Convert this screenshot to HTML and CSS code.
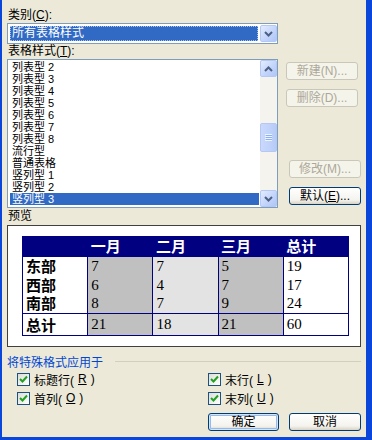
FILE: index.html
```html
<!DOCTYPE html>
<html lang="zh-CN">
<head>
    <meta charset="UTF-8">
    <meta name="viewport" content="width=device-width, initial-scale=1.0">
    <title>表格自动套用格式</title>
    <link rel="stylesheet" href="styles.css">
</head>
<body>
    <div class="window">
        <div class="dialog">
            <div class="label label-top">类别(<u>C</u>):</div>
            <div class="combo">
                <span class="combo-value">所有表格样式</span>
                <span class="arrow-btn">
                    <svg width="9" height="6" viewBox="0 0 9 6"><path d="M1 1 L4.5 4.5 L8 1" fill="none" stroke="#4d6185" stroke-width="2"/></svg>
                </span>
            </div>

            <div class="label label-mid">表格样式(<u>T</u>):</div>
            <div class="style-row">
                <div class="listbox">
                    <ul class="items">
                        <li>列表型 2</li>
                        <li>列表型 3</li>
                        <li>列表型 4</li>
                        <li>列表型 5</li>
                        <li>列表型 6</li>
                        <li>列表型 7</li>
                        <li>列表型 8</li>
                        <li>流行型</li>
                        <li>普通表格</li>
                        <li>竖列型 1</li>
                        <li>竖列型 2</li>
                        <li class="selected">竖列型 3</li>
                    </ul>
                    <div class="scrollbar">
                        <span class="scroll-btn">
                            <svg width="9" height="6" viewBox="0 0 9 6"><path d="M1 5 L4.5 1.5 L8 5" fill="none" stroke="#4d6185" stroke-width="2"/></svg>
                        </span>
                        <div class="track">
                            <span class="thumb">
                                <svg width="7" height="7" viewBox="0 0 7 7">
                                    <path d="M0 0.5 H7 M0 2.5 H7 M0 4.5 H7 M0 6.5 H7" stroke="#eef4fe" stroke-width="1"/>
                                    <path d="M1 1.5 H8 M1 3.5 H8 M1 5.5 H8" stroke="#8cb0f8" stroke-width="1"/>
                                </svg>
                            </span>
                        </div>
                        <span class="scroll-btn">
                            <svg width="9" height="6" viewBox="0 0 9 6"><path d="M1 1 L4.5 4.5 L8 1" fill="none" stroke="#4d6185" stroke-width="2"/></svg>
                        </span>
                    </div>
                </div>
                <div class="side-buttons">
                    <button class="btn disabled">新建(N)...</button>
                    <button class="btn disabled gap">删除(D)...</button>
                    <button class="btn disabled shift push-down">修改(M)...</button>
                    <button class="btn shift gap">默认(<u>E</u>)...</button>
                </div>
            </div>

            <div class="label label-preview">预览</div>
            <div class="preview">
                <table class="sample">
                    <tr class="head">
                        <th></th>
                        <th>一月</th>
                        <th>二月</th>
                        <th>三月</th>
                        <th>总计</th>
                    </tr>
                    <tr class="body first">
                        <td class="row-head">东部</td>
                        <td class="c1">7</td>
                        <td class="c2">7</td>
                        <td class="c3">5</td>
                        <td class="c4">19</td>
                    </tr>
                    <tr class="body">
                        <td class="row-head">西部</td>
                        <td class="c1">6</td>
                        <td class="c2">4</td>
                        <td class="c3">7</td>
                        <td class="c4">17</td>
                    </tr>
                    <tr class="body">
                        <td class="row-head">南部</td>
                        <td class="c1">8</td>
                        <td class="c2">7</td>
                        <td class="c3">9</td>
                        <td class="c4">24</td>
                    </tr>
                    <tr class="total">
                        <td class="row-head">总计</td>
                        <td class="c1">21</td>
                        <td class="c2">18</td>
                        <td class="c3">21</td>
                        <td class="c4">60</td>
                    </tr>
                </table>
            </div>

            <div class="group-title">
                <span>将特殊格式应用于</span>
                <span class="rule"></span>
            </div>
            <div class="checks">
                <label class="check"><span class="box"><svg width="11" height="11" viewBox="0 0 11 11"><path d="M2 5 L4.5 7.5 L9 2.5" fill="none" stroke="#21a121" stroke-width="2"/></svg></span>标题行(<u>R</u>)</label>
                <label class="check"><span class="box"><svg width="11" height="11" viewBox="0 0 11 11"><path d="M2 5 L4.5 7.5 L9 2.5" fill="none" stroke="#21a121" stroke-width="2"/></svg></span>末行(<u>L</u>)</label>
                <label class="check"><span class="box"><svg width="11" height="11" viewBox="0 0 11 11"><path d="M2 5 L4.5 7.5 L9 2.5" fill="none" stroke="#21a121" stroke-width="2"/></svg></span>首列(<u>O</u>)</label>
                <label class="check"><span class="box"><svg width="11" height="11" viewBox="0 0 11 11"><path d="M2 5 L4.5 7.5 L9 2.5" fill="none" stroke="#21a121" stroke-width="2"/></svg></span>末列(<u>U</u>)</label>
            </div>

            <div class="actions">
                <button class="btn ok">确定</button>
                <button class="btn cancel">取消</button>
            </div>
        </div>
    </div>
</body>
</html>
```

FILE: styles.css
```css
*, *::before, *::after {
	box-sizing: border-box;
}

body {
	margin: 0;
	font-family: "Liberation Sans", "Noto Sans CJK SC", sans-serif;
	font-size: 12px;
	color: #000;
}

u {
	text-decoration: underline;
	text-underline-offset: 1px;
}

.window {
	width: 372px;
	height: 440px;
	background: #ece9d8;
	border-left: 2px solid #0a46da;
	border-right: 6px solid #0a46da;
	border-bottom: 3px solid #0a46da;
}

.dialog {
	display: flex;
	flex-direction: column;
	padding: 7px 5px 0 5px;
}

.label {
	height: 16px;
	line-height: 16px;
	padding-left: 1px;
}

.label-mid {
	height: 15px;
	line-height: 15px;
}

.label-preview {
	height: 17px;
	line-height: 17px;
}

/* combo box */
.combo {
	width: 271px;
	height: 21px;
	border: 1px solid #7f9db9;
	background: #fff;
	display: flex;
	align-items: center;
	padding: 0 0 0 2px;
}

.combo-value {
	flex: 1;
	height: 15px;
	line-height: 15px;
	padding-left: 2px;
	margin-right: 2px;
	background: #316ac5;
	color: #fff;
	outline: 1px dotted #a8c0ea;
	outline-offset: -1px;
}

.arrow-btn,
.scroll-btn {
	width: 17px;
	height: 18px;
	display: flex;
	align-items: center;
	justify-content: center;
	border: 1px solid #b4c8f6;
	border-radius: 2px;
	background: linear-gradient(135deg, #e4ecfd, #c1d3fb 60%, #b1c6f6);
}

.arrow-btn {
	height: 17px;
}

/* list of styles */
.style-row {
	display: flex;
}

.listbox {
	width: 271px;
	height: 149px;
	border: 1px solid #7f9db9;
	background: #fff;
	display: flex;
}

.items {
	flex: 1;
	list-style: none;
	margin: 0;
	padding: 1px 1px 0 2px;
	font-size: 11px;
}

.items li {
	height: 12px;
	line-height: 12px;
	padding-left: 2px;
	white-space: pre;
}

.items li.selected {
	background: #316ac5;
	color: #fff;
}

.scrollbar {
	width: 17px;
	display: flex;
	flex-direction: column;
	background: #f4f3ee;
}

.scrollbar .scroll-btn {
	height: 17px;
}

.track {
	flex: 1;
	padding-top: 46px;
}

.thumb {
	display: flex;
	align-items: center;
	justify-content: center;
	height: 29px;
	border: 1px solid #b4c8f6;
	border-radius: 2px;
	background: linear-gradient(90deg, #cad8fb, #c1d3fb 50%, #b6cbf7);
}

.side-buttons {
	width: 75px;
	margin-left: 8px;
	padding: 3px 0;
	display: flex;
	flex-direction: column;
	align-items: flex-start;
}

.side-buttons .btn {
	width: 72px;
}

.side-buttons .gap {
	margin-top: 9px;
}

.side-buttons .shift {
	margin-left: 3px;
}

.side-buttons .push-down {
	margin-top: auto;
}

/* push buttons */
.btn {
	height: 18px;
	padding: 0;
	font-family: inherit;
	font-size: 12px;
	line-height: 16px;
	color: #000;
	border: 1px solid #003c74;
	border-radius: 3px;
	background: linear-gradient(#ffffff, #f4f3ee 75%, #d8d2c6);
	text-align: center;
}

.btn.disabled {
	color: #aca899;
	border-color: #c9c7ba;
	background: #f5f4ea;
}

.btn.ok {
	width: 71px;
	box-shadow: inset 0 0 0 1px #cee7ff, inset 0 0 0 2px #98b8ea;
}

.btn.cancel {
	width: 72px;
}

/* preview */
.preview {
	height: 122px;
	border: 1px solid #404040;
	background: #fff;
	padding: 10px 11px 0 14px;
}

.sample {
	width: 327px;
	border-collapse: collapse;
	border: 1px solid #000080;
	table-layout: fixed;
}

.sample th,
.sample td {
	width: 65px;
	padding: 0 3px;
	text-align: left;
	vertical-align: middle;
}

.sample .head th {
	height: 20px;
	background: #000080;
	color: #fff;
	font-family: "Liberation Sans", "Noto Sans CJK SC", sans-serif;
	font-size: 15px;
	font-weight: bold;
	line-height: 18px;
}

.sample .body td {
	height: 19px;
	line-height: 17px;
}

.sample .total td {
	height: 22px;
	border-top: 1px solid #000080;
}

.sample td {
	font-family: "Liberation Serif", serif;
	font-size: 15px;
}

.sample td.row-head {
	font-family: "Liberation Sans", "Noto Sans CJK SC", sans-serif;
	font-weight: bold;
	border-right: 1px solid #000080;
}

.sample .c1 {
	background: #c0c0c0;
}

.sample .c2 {
	background: #e3e3e3;
	border-left: 1px solid #000080;
}

.sample .c3 {
	background: #c0c0c0;
	border-left: 1px solid #000080;
}

.sample .c4 {
	background: #fff;
	border-left: 1px solid #000080;
}

/* apply special format */
.group-title {
	margin-top: 6px;
	height: 16px;
	display: flex;
	align-items: center;
	color: #0046d5;
}

.group-title .rule {
	flex: 1;
	height: 1px;
	margin-left: 12px;
	background: #d0d0bf;
}

.checks {
	display: grid;
	grid-template-columns: 191px 1fr;
	row-gap: 1px;
	margin-top: 1px;
	padding-left: 10px;
}

.check {
	height: 18px;
	display: flex;
	align-items: center;
	gap: 4px;
}

.box {
	width: 13px;
	height: 13px;
	border: 1px solid #1c5180;
	background: linear-gradient(135deg, #dcdcd7, #ffffff);
	display: flex;
}

.actions {
	display: flex;
	justify-content: flex-end;
	gap: 10px;
	margin-top: 6px;
}
```
